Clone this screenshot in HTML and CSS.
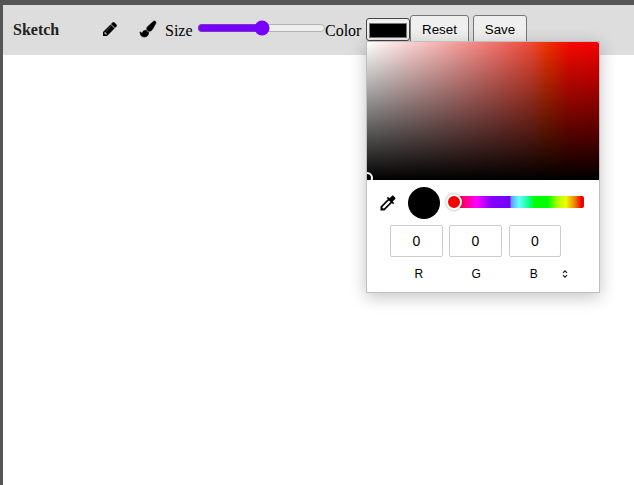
FILE: index.html
```html
<!DOCTYPE html>
<html lang="en">
<head>
<meta charset="utf-8">
<title>Sketch</title>
<link rel="stylesheet" href="styles.css">
</head>
<body>
<header class="toolbar">
  <strong class="brand">Sketch</strong>
  <svg class="tool pencil" viewBox="128 128 1536 1536"><path d="M491 1536l91-91-235-235-91 91v107h128v128h107zm523-928q0-22-22-22-10 0-17 7l-542 542q-7 7-7 17 0 22 22 22 10 0 17-7l542-542q7-7 7-17zm-54-192l416 416-832 832h-416v-416zm683 96q0 53-37 90l-166 166-416-416 166-165q36-38 90-38 53 0 91 38l235 234q37 39 37 91z"/></svg>
  <svg class="tool brush" viewBox="0 0 1792 1792"><path d="M1615 0q70 0 122.5 46.5t52.5 116.5q0 63-45 151-332 629-465 752-97 91-218 91-126 0-216.500-92.500t-90.500-219.500q0-128 92-212l638-579q59-54 130-54zm-909 1034q39 76 106.500 130t150.500 76l1 71q4 213-129.500 347t-348.500 134q-123 0-218-46.500t-152.500-127.500-86.500-183-29-220q7 5 41 30t62 44.500 59 36.500 46 17q41 0 55-37 25-66 57.500-112.500t69.500-76 88-47.500 103-25.500 125-10.500z"/></svg>
  <label class="label size-label">Size</label>
  <input class="size" type="range" min="0" max="100" value="50">
  <label class="label color-label">Color</label>
  <div class="color">
    <div class="swatch"></div>
    <div class="picker">
      <div class="shade"><span class="shade-handle"></span></div>
      <div class="tools">
        <svg class="dropper" viewBox="0 0 24 24"><path d="M20.71 5.630l-2.340-2.340c-.39-.39-1.020-.39-1.410 0l-3.120 3.120-1.930-1.910-1.410 1.410 1.420 1.420L3 16.250V21h4.750l8.920-8.920 1.420 1.420 1.410-1.410-1.920-1.920 3.120-3.120c.4-.4.4-1.030.01-1.420zM6.920 19L5 17.080l8.060-8.060 1.920 1.920L6.920 19z"/></svg>
        <span class="current"></span>
        <div class="hue"><span class="hue-handle"></span></div>
      </div>
      <div class="values"><span>0</span><span>0</span><span>0</span></div>
      <div class="names"><span>R</span><span>G</span><span>B</span>
        <svg class="switch" viewBox="0 0 6 8"><path d="M1 2.800L3 .8l2 2M1 5.200l2 2 2-2"/></svg>
      </div>
    </div>
  </div>
  <button class="button reset">Reset</button>
  <button class="button save">Save</button>
</header>
</body>
</html>
```
FILE: styles.css
```css
* { box-sizing: border-box; }
html { height: 100%; overflow: hidden; }
body {
  margin: 0;
  height: 100%;
  border-top: 5px solid #555;
  border-left: 3px solid #555;
  background: #fff;
  color: #000;
  font: 16px "Liberation Serif", serif;
}
.toolbar {
  display: flex;
  align-items: flex-start;
  height: 50px;
  padding-left: 10px;
  background: #ddd;
}
.brand { width: 90px; margin-top: 16px; line-height: 18px; color: #222; }
.tool { flex: none; fill: #000; }
.pencil { width: 14px; height: 14px; margin-top: 17px; stroke: #000; stroke-width: 40; }
.brush { width: 16px; height: 16px; margin: 16px 0 0 23px; overflow: visible; stroke: #000; stroke-width: 70; }
.label { flex: none; margin-top: 17px; line-height: 18px; }
.size-label { width: 30px; margin-left: 9px; }
.size-label + .size { flex: none; width: 129px; height: 16px; margin: 15px 0 0 2px; accent-color: #7700ff; }
.color-label { width: 41px; margin-left: -1px; }
.color { position: relative; flex: none; width: 44px; height: 23px; margin-top: 13px; }
.swatch {
  height: 23px;
  padding: 4px 2px;
  border: 1px solid #444;
  border-radius: 3px;
  background: #efefef;
}
.swatch::before { content: ""; display: block; height: 13px; border: 1px solid #777; background: #000; }
.button {
  flex: none;
  height: 30px;
  margin: 10px 0 0;
  padding: 0 0 2px;
  border: 1px solid #767676;
  border-radius: 3px;
  background: #efefef;
  color: #000;
  font: 13.333px "Liberation Sans", sans-serif;
}
.reset { width: 59px; }
.save { width: 54px; margin-left: 4px; }
.picker {
  position: absolute;
  top: 23px;
  left: 0;
  z-index: 1;
  width: 234px;
  height: 252px;
  border: 1px solid #bfbfbf;
  background: #fff;
  box-shadow: 0 4px 16px rgba(0, 0, 0, .24);
  font-family: "Liberation Sans", sans-serif;
}
.shade {
  position: relative;
  height: 138px;
  overflow: hidden;
  border-top-right-radius: 2px;
  background:
    linear-gradient(to top, #000, transparent),
    linear-gradient(to right, #fff 0%, #f4aaa8 34%, #f07068 56%, #ee4934 71%, #f03000 78%, #f50a00 87%, #f40000 100%);
}
.shade-handle {
  position: absolute;
  left: -6px;
  bottom: -4px;
  width: 12px;
  height: 12px;
  border: 2px solid #fff;
  border-radius: 50%;
}
.tools { display: flex; align-items: center; height: 45px; padding-left: 11px; }
.dropper { width: 20px; height: 20px; margin-top: 0; }
.current { width: 32px; height: 32px; margin: 1px 0 0 10px; border-radius: 50%; background: #000; }
.hue {
  position: relative;
  width: 130px;
  height: 12px;
  margin: -1px 0 0 14px;
  border-radius: 2px;
  background: linear-gradient(to right, #f00 0%, #ff0070 8%, #f0f 17%, #8500ff 29%, #7400ff 43%, #60a0ff 44%, #60ffff 50%, #00ff70 59%, #0f0 62%, #0f0 72%, #b0ff00 80%, #eeff00 86%, #f08000 93%, #f00000 98%);
}
.hue-handle {
  position: absolute;
  left: -8px;
  top: -2px;
  width: 16px;
  height: 16px;
  border: 2px solid #fff;
  border-radius: 50%;
  background: #f40000;
  box-shadow: 0 0 3px rgba(0, 0, 0, .4);
}
.values { display: flex; gap: 6px; padding-left: 23px; }
.values span {
  width: 53px;
  height: 32px;
  border: 1px solid #ccc;
  border-radius: 2px;
  font-size: 14px;
  line-height: 31px;
  text-align: center;
}
.values span:last-child { width: 52px; margin-left: 1px; }
.names { display: flex; align-items: center; height: 34px; padding-left: 23px; font-size: 12px; text-align: center; }
.names span { width: 57.500px; }
.names .switch { width: 6px; height: 8px; margin-left: -1px; fill: none; stroke: #222; stroke-width: 1.200; }
```
